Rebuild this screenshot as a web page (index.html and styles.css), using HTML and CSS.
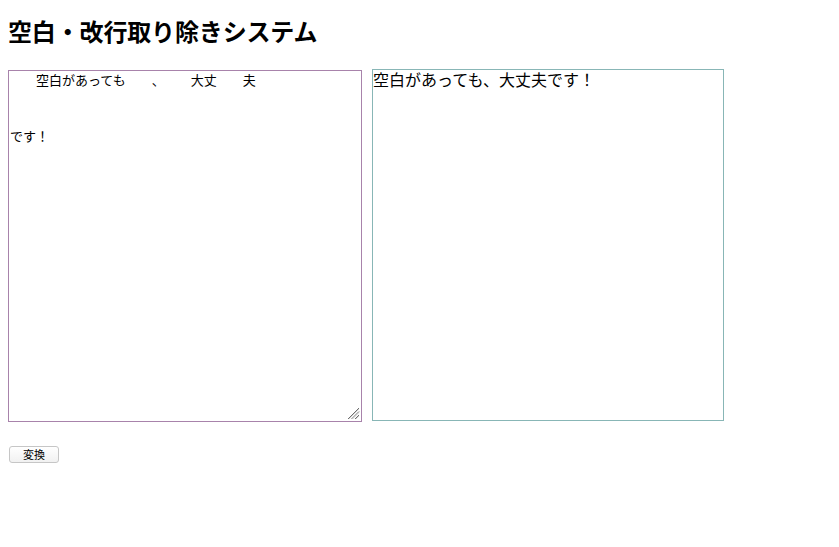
FILE: index.html
```html
<!DOCTYPE html>
<html lang="ja">
<head>
<meta charset="utf-8">
<title>空白・改行取り除きシステム</title>
<link rel="stylesheet" href="styles.css">
</head>
<body>
<h1 class="title">空白・改行取り除きシステム</h1>
<div class="panes">
<div class="input-wrap">
<textarea class="input">　　空白があっても　　、　　大丈　　夫



です！</textarea>
<svg class="grip" width="14" height="14" viewBox="0 0 14 14" aria-hidden="true">
<path d="M2 13 L13 2 M5.5 13 L13 5.5 M9 13 L13 9" stroke="#6e6e6e" stroke-width="1" fill="none"/>
<path d="M3 13 L13 3 M6.5 13 L13 6.5 M10 13 L13 10" stroke="#d4d4d4" stroke-width="1" fill="none"/>
</svg>
</div>
<div class="output">空白があっても、大丈夫です！</div>
</div>
<div class="actions">
<button class="convert" type="button">変換</button>
</div>
</body>
</html>
```
FILE: styles.css
```css
body {
  margin: 8px;
  font-family: "Noto Sans CJK JP", "Noto Sans", sans-serif;
  color: #000;
  background: #fff;
  text-spacing-trim: space-all;
}
.title {
  margin: 11px 0 26px;
  font-size: 24px;
  line-height: 24px;
  font-weight: bold;
  letter-spacing: -0.15px;
}
.panes {
  display: flex;
  align-items: flex-start;
  gap: 10px;
}
.input-wrap {
  position: relative;
  margin-top: 1px;
  width: 354px;
  height: 352px;
}
.input {
  display: block;
  box-sizing: border-box;
  width: 354px;
  height: 352px;
  margin: 0;
  padding: 2px 1px;
  border: 1px solid #a883ab;
  font-family: "Noto Sans CJK JP", sans-serif;
  font-size: 13px;
  line-height: 14px;
  color: #000;
  resize: none;
  outline: none;
  text-spacing-trim: space-all;
}
.grip {
  position: absolute;
  right: 2px;
  bottom: 2px;
  pointer-events: none;
}
.output {
  box-sizing: border-box;
  width: 352px;
  height: 352px;
  border: 1px solid #88b6b6;
  padding: 0;
  font-size: 16px;
  line-height: 19px;
}
.actions {
  display: flex;
  margin-top: 24px;
}
.convert {
  display: block;
  box-sizing: border-box;
  width: 50px;
  height: 17px;
  margin-left: 1px;
  padding: 0;
  border: 1px solid #c6c6c6;
  border-radius: 3px;
  background: linear-gradient(#ffffff, #f1f1f1);
  font-family: "Noto Sans CJK JP", sans-serif;
  font-size: 11px;
  line-height: 15px;
  color: #000;
}
```
